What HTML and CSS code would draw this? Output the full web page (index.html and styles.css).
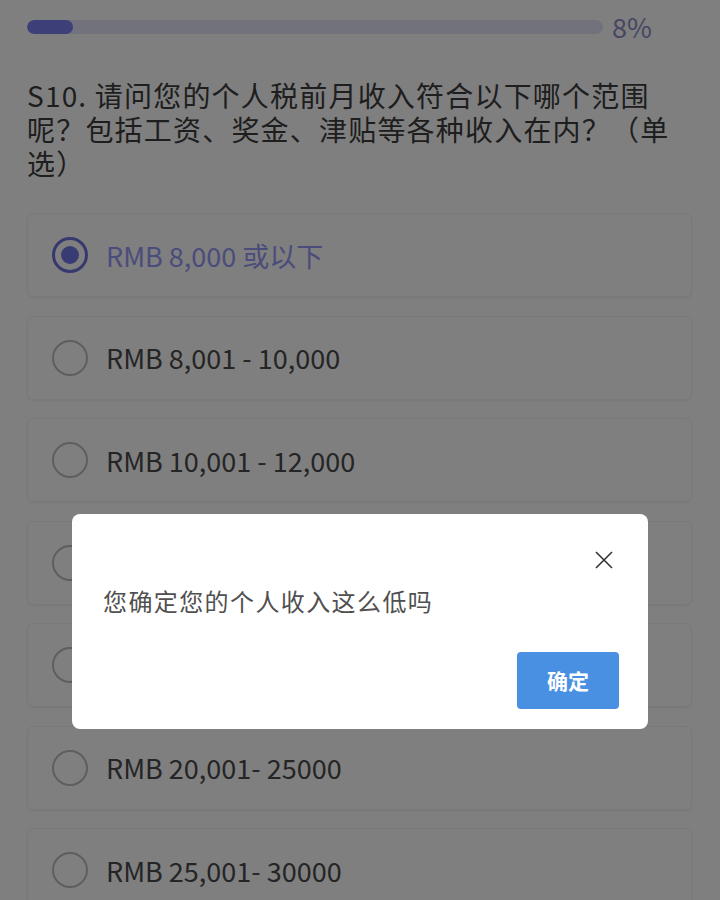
FILE: index.html
```html
<!DOCTYPE html>
<html>
<head>
	<meta charset="UTF-8"/>
	<link rel="stylesheet" href="styles.css">
</head>
<body>

<div class="page">
	<div class="progress">
		<div class="track"><div class="fill" style="width:8%;"></div></div>
		<span class="percent">8%</span>
	</div>

	<div class="question">S10. 请问您的个人税前月收入符合以下哪个范围呢？包括工资、奖金、津贴等各种收入在内？（单选）</div>

	<div class="options">
		<div class="option on"><span class="radio"></span><span class="label">RMB 8,000 或以下</span></div>
		<div class="option"><span class="radio"></span><span class="label">RMB 8,001 - 10,000</span></div>
		<div class="option"><span class="radio"></span><span class="label">RMB 10,001 - 12,000</span></div>
		<div class="option"><span class="radio"></span><span class="label">RMB 12,001 - 15,000</span></div>
		<div class="option"><span class="radio"></span><span class="label">RMB 15,001 - 20,000</span></div>
		<div class="option"><span class="radio"></span><span class="label">RMB 20,001- 25000</span></div>
		<div class="option"><span class="radio"></span><span class="label">RMB 25,001- 30000</span></div>
	</div>
</div>

<!--遮罩和弹窗-->
<div class="mask"></div>
<div class="dialog">
	<div class="dialog-head">
		<svg class="close" width="18" height="18" viewBox="0 0 18 18">
			<path d="M1 1L17 17M17 1L1 17" stroke="#333" stroke-width="1.6" fill="none"/>
		</svg>
	</div>
	<div class="dialog-text">您确定您的个人收入这么低吗</div>
	<div class="dialog-foot">
		<a href="javascript:" class="btn">确定</a>
	</div>
</div>

</body>
</html>
```

FILE: styles.css
```css
*{
	border:0;
	padding:0;
	margin:0;
	text-decoration:none;
	box-sizing:border-box;
}
body{
	background-color:#fff;
	font-family:"Noto Sans CJK SC","Noto Sans",sans-serif;
	overflow:hidden;
}
.page{
	padding:12px 28px 0 27px;
}
.progress{
	display:flex;
	align-items:center;
	gap:9px;
	height:30px;
}
.track{
	width:576px;
	height:14px;
	border-radius:7px;
	background:#e2e4f6;
	overflow:hidden;
}
.fill{
	height:14px;
	border-radius:7px;
	background:#7a7ef2;
}
.percent{
	font-size:27px;
	color:#888cc4;
	line-height:30px;
}
.question{
	margin-top:36px;
	font-size:28px;
	line-height:34px;
	letter-spacing:1.2px;
	color:#3c3c3c;
}
.options{
	margin-top:33px;
	display:flex;
	flex-direction:column;
	gap:18.5px;
}
.option{
	display:flex;
	align-items:center;
	gap:18px;
	height:84px;
	padding-left:24px;
	border:1px solid #f2f2f2;
	border-radius:6px;
	box-shadow:0 1px 2px rgba(0,0,0,.07);
}
.radio{
	width:36px;
	height:36px;
	border-radius:50%;
	border:2px solid #bdbdbd;
	display:flex;
	align-items:center;
	justify-content:center;
	flex-shrink:0;
}
.label{
	font-size:27px;
	color:#4a4a4a;
}
.option.on .radio{
	border:3px solid #6c70dc;
}
.option.on .radio:after{
	content:"";
	width:18px;
	height:18px;
	border-radius:50%;
	background:#7276e6;
}
.option.on .label{
	color:#9498f6;
}
.mask{
	position:fixed;
	left:0;
	top:0;
	right:0;
	bottom:0;
	background:rgba(0,0,0,.5);
	z-index:1;
}
.dialog{
	position:fixed;
	left:72px;
	top:514px;
	width:576px;
	height:215px;
	background:#fff;
	border-radius:8px;
	z-index:2;
	padding:36px 29px 20px 31px;
	display:flex;
	flex-direction:column;
}
.dialog-head{
	display:flex;
	justify-content:flex-end;
	align-items:center;
	height:20px;
	padding-right:6px;
}
.dialog-text{
	margin-top:15px;
	font-size:24px;
	line-height:32px;
	letter-spacing:1.4px;
	color:#505050;
}
.dialog-foot{
	margin-top:auto;
	display:flex;
	justify-content:flex-end;
}
.btn{
	width:102px;
	height:57px;
	line-height:57px;
	text-align:center;
	background:#4a90e2;
	border-radius:4px;
	color:#fff;
	font-size:21px;
	font-weight:bold;
}
```
